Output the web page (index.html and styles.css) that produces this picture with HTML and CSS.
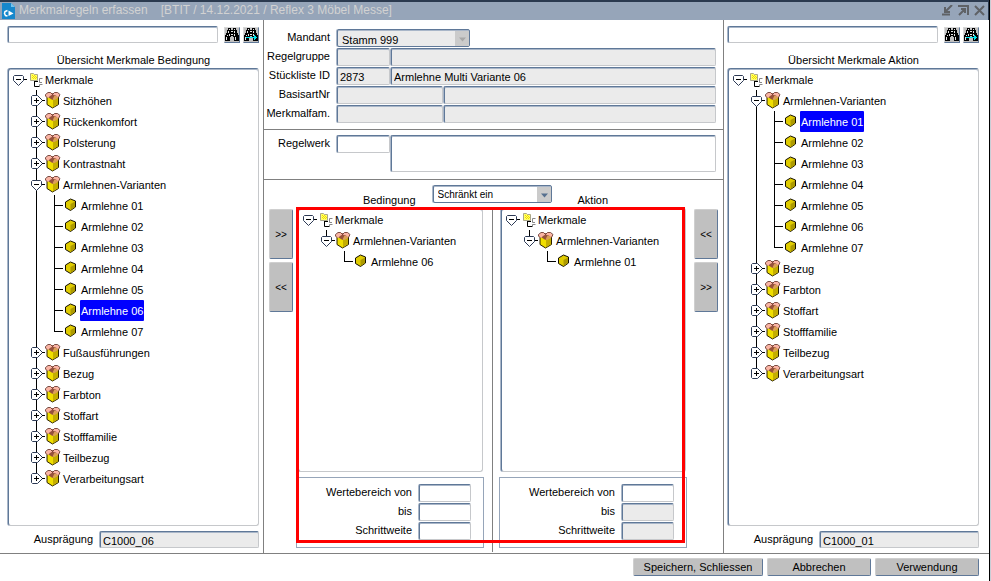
FILE: index.html
```html
<!DOCTYPE html>
<html lang="de">
<head>
<meta charset="utf-8">
<meta name="viewport" content="width=device-width, initial-scale=1">
<title>Merkmalregeln erfassen</title>
<link rel="stylesheet" href="styles.css">
</head>
<body>
<svg class="sprite" aria-hidden="true">
  <symbol id="open" viewBox="0 0 17 21">
    <path d="M4.5 6.5H12.5L13.5 7.5V11.5L8.5 16.5L3.5 11.5V7.5Z" fill="#fff" stroke="#2c3a55"/>
    <path d="M6 10.5H11M14 10.5H17" stroke="#000" fill="none"/>
  </symbol>
  <symbol id="closed" viewBox="0 0 17 21">
    <path d="M4.5 5.5H9.5L14.5 10.5L9.5 15.5H4.5L3.5 14.5V6.5Z" fill="#fff" stroke="#2c3a55"/>
    <path d="M6 10.5H11M8.5 8V13M14 10.5H17" stroke="#000" fill="none"/>
  </symbol>
  <symbol id="root" viewBox="0 0 16 21">
    <path d="M3.5 4.5H6.5L7.5 5.5H10.5V11.5H3.5Z" fill="#ffff66" stroke="#aaa68a"/>
    <path d="M5 6h1v1h-1zM7 6h1v1h-1zM6 7h1v1h-1zM8 7h1v1h-1zM5 8h1v1h-1zM7 8h1v1h-1zM9 8h1v1h-1zM6 9h1v1h-1zM8 9h1v1h-1z" fill="#f0dc00"/>
    <path d="M7.500 12V17.500H12M8 12.500H11" fill="none" stroke="#000"/>
    <path d="M15.500 9.500H12.500V13.500H15M15.500 15.500H12.500V18" fill="none" stroke="#888"/>
  </symbol>
  <symbol id="box" viewBox="0 0 16 21">
    <path d="M2 6V14.500L7.500 18L13.500 14.500V6Z" fill="#f0de00" stroke="#2a2000"/>
    <path d="M8 10L13 7V14L8 17.500Z" fill="#c4ae00"/>
    <path d="M2 6.500L7.500 3L13 6.500L7.500 10Z" fill="#96513c"/>
    <path d="M7.500 9.500L9.500 5.500L13 6.500V8L9.500 10Z" fill="#dca057"/>
    <path d="M.5 5L3 2.500H6L7.500 4.500L5 6L3 8L.5 6.500Z" fill="#fab4a4"/>
    <path d="M7.500 4.500L9.500 2.500H12.500L15 5L13.500 7.500L11 5.500Z" fill="#fab4a4"/>
    <path d="M2 7.500L.5 6V4.500L3 2.500H5.500L7.500 4.500L9.500 2.500H12.500L15 4.500L13.500 7.500" fill="none" stroke="#5a2a20" stroke-width=".8"/>
  </symbol>
  <symbol id="cube" viewBox="0 0 16 21">
    <path d="M2.500 7L7.500 4L12.500 6V12L7.500 15.500L2.500 12.500Z" fill="#e0cc00" stroke="#151000"/>
    <path d="M7.500 9L12 6.500V12L7.500 15Z" fill="#ad9a00"/>
  </symbol>
  <symbol id="binoculars" viewBox="0 0 14 14">
    <path d="M3 0h3v2h2V0h3v2h1v3h1v2h1v6H9V9H8V8H6v1H5v4H0V7h1V5h1V2h1z" fill="#000"/>
    <path d="M4 1h1v1H4zM9 1h1v1H9zM3 3h1v2H3zM6 3h2v1H6zM9 3h1v2H9zM2 7h1v1H2zM1 9h1v3H1zM4 6h1v2H4zM9 6h1v2H9zM10 9h1v3h-1zM6 6h2v1H6z" fill="#e4e4e4"/>
  </symbol>
  <symbol id="binoculars-next" viewBox="0 0 14 14">
    <use href="#binoculars" width="14" height="14"/>
    <path d="M2 9h8V7h1v1h1v1h1v1h-1v1h-1v1h-1v-2H2z" fill="#00e5ee"/>
  </symbol>
</svg>

<div class="window">
  <header class="titlebar">
    <svg class="logo" viewBox="0 0 14 16" aria-hidden="true">
      <path d="M0 0H9L13 4V16H0Z" fill="#1687cc"/>
      <path d="M9 0L13 4H9Z" fill="#74c4ee"/>
      <path d="M5.500 7.500L3 8.500L2.500 10.500L3.500 12.500L5.500 13" fill="none" stroke="#fff" stroke-width="1.500"/>
      <path d="M6.500 7.500L11.500 10.500L6.500 13Z" fill="#fff"/>
    </svg>
    <h1>Merkmalregeln erfassen</h1>
    <span class="context">[BTIT / 14.12.2021 / Reflex 3 Möbel Messe]</span>
    <div class="controls">
      <button type="button" aria-label="Minimieren"><svg viewBox="0 0 11 11"><path d="M10 0L4 6M3 2V7H8M0 9.500H8" /></svg></button>
      <button type="button" aria-label="Maximieren"><svg viewBox="0 0 11 11"><path d="M1 10L7 4M3 4H7V8M0 1H10V10" /></svg></button>
      <button type="button" aria-label="Schließen"><svg viewBox="0 0 11 11"><path d="M1 1L10 10M10 1L1 10" /></svg></button>
    </div>
  </header>

  <main class="panes">
    <section class="side side-left">
      <div class="search">
        <input class="field" type="text" aria-label="Suche Bedingung">
        <button type="button" aria-label="Suchen"><svg><use href="#binoculars"/></svg></button>
        <button type="button" aria-label="Weitersuchen"><svg><use href="#binoculars-next"/></svg></button>
      </div>
      <h2>Übersicht Merkmale Bedingung</h2>
      <div class="tree">
        <div class="row"><svg class="toggle"><use href="#open"/></svg><svg class="icon"><use href="#root"/></svg><span>Merkmale</span></div>
        <ul>
          <li><div class="row"><svg class="toggle"><use href="#closed"/></svg><svg class="icon"><use href="#box"/></svg><span>Sitzhöhen</span></div></li>
          <li><div class="row"><svg class="toggle"><use href="#closed"/></svg><svg class="icon"><use href="#box"/></svg><span>Rückenkomfort</span></div></li>
          <li><div class="row"><svg class="toggle"><use href="#closed"/></svg><svg class="icon"><use href="#box"/></svg><span>Polsterung</span></div></li>
          <li><div class="row"><svg class="toggle"><use href="#closed"/></svg><svg class="icon"><use href="#box"/></svg><span>Kontrastnaht</span></div></li>
          <li><div class="row"><svg class="toggle"><use href="#open"/></svg><svg class="icon"><use href="#box"/></svg><span>Armlehnen-Varianten</span></div>
            <ul>
              <li class="leaf"><div class="row"><svg class="icon"><use href="#cube"/></svg><span>Armlehne 01</span></div></li>
              <li class="leaf"><div class="row"><svg class="icon"><use href="#cube"/></svg><span>Armlehne 02</span></div></li>
              <li class="leaf"><div class="row"><svg class="icon"><use href="#cube"/></svg><span>Armlehne 03</span></div></li>
              <li class="leaf"><div class="row"><svg class="icon"><use href="#cube"/></svg><span>Armlehne 04</span></div></li>
              <li class="leaf"><div class="row"><svg class="icon"><use href="#cube"/></svg><span>Armlehne 05</span></div></li>
              <li class="leaf"><div class="row"><svg class="icon"><use href="#cube"/></svg><span class="selected">Armlehne 06</span></div></li>
              <li class="leaf"><div class="row"><svg class="icon"><use href="#cube"/></svg><span>Armlehne 07</span></div></li>
            </ul>
          </li>
          <li><div class="row"><svg class="toggle"><use href="#closed"/></svg><svg class="icon"><use href="#box"/></svg><span>Fußausführungen</span></div></li>
          <li><div class="row"><svg class="toggle"><use href="#closed"/></svg><svg class="icon"><use href="#box"/></svg><span>Bezug</span></div></li>
          <li><div class="row"><svg class="toggle"><use href="#closed"/></svg><svg class="icon"><use href="#box"/></svg><span>Farbton</span></div></li>
          <li><div class="row"><svg class="toggle"><use href="#closed"/></svg><svg class="icon"><use href="#box"/></svg><span>Stoffart</span></div></li>
          <li><div class="row"><svg class="toggle"><use href="#closed"/></svg><svg class="icon"><use href="#box"/></svg><span>Stofffamilie</span></div></li>
          <li><div class="row"><svg class="toggle"><use href="#closed"/></svg><svg class="icon"><use href="#box"/></svg><span>Teilbezug</span></div></li>
          <li><div class="row"><svg class="toggle"><use href="#closed"/></svg><svg class="icon"><use href="#box"/></svg><span>Verarbeitungsart</span></div></li>
        </ul>
      </div>
      <div class="value">
        <label for="val-left">Ausprägung</label>
        <input class="field" id="val-left" type="text" value="C1000_06" readonly>
      </div>
    </section>

    <section class="center">
      <div class="form">
        <div class="line"><label for="mandant">Mandant</label>
          <div class="select select-off"><select class="field" id="mandant" disabled><option>Stamm 999</option></select><svg viewBox="0 0 14 14" aria-hidden="true"><path d="M4 6H11L7.500 10Z"/></svg></div></div>
        <div class="line"><label for="gruppe">Regelgruppe</label><input class="field code" id="gruppe" readonly><input class="field" aria-label="Regelgruppe Bezeichnung" readonly></div>
        <div class="line"><label for="stueck">Stückliste ID</label><input class="field code" id="stueck" value="2873" readonly><input class="field" aria-label="Stückliste Bezeichnung" value="Armlehne Multi Variante 06" readonly></div>
        <div class="line"><label for="basis">BasisartNr</label><input class="field number" id="basis" readonly><input class="field" aria-label="Basisart Bezeichnung" readonly></div>
        <div class="line"><label for="fam">Merkmalfam.</label><input class="field number" id="fam" readonly><input class="field" aria-label="Merkmalfamilie Bezeichnung" readonly></div>
      </div>
      <div class="form rule">
        <div class="line"><label for="regel">Regelwerk</label><input class="field code" id="regel"><textarea class="field" aria-label="Regelwerk Text"></textarea></div>
      </div>
      <div class="mode">
        <h2 class="from">Bedingung</h2>
        <div class="select"><select class="field" aria-label="Art der Regel"><option>Schränkt ein</option></select><svg viewBox="0 0 14 14" aria-hidden="true"><path d="M4 6H11L7.500 10Z"/></svg></div>
        <h2 class="to">Aktion</h2>
      </div>
      <div class="work">
        <div class="movers">
          <button type="button">&gt;&gt;</button>
          <button type="button">&lt;&lt;</button>
        </div>
        <div class="pair">
          <div class="half">
            <div class="tree">
              <div class="row"><svg class="toggle"><use href="#open"/></svg><svg class="icon"><use href="#root"/></svg><span>Merkmale</span></div>
              <ul><li><div class="row"><svg class="toggle"><use href="#open"/></svg><svg class="icon"><use href="#box"/></svg><span>Armlehnen-Varianten</span></div>
                <ul><li class="leaf"><div class="row"><svg class="icon"><use href="#cube"/></svg><span>Armlehne 06</span></div></li></ul></li></ul>
            </div>
            <div class="range">
              <div><label for="a-von">Wertebereich von</label><input class="field" id="a-von"></div>
              <div><label for="a-bis">bis</label><input class="field" id="a-bis"></div>
              <div><label for="a-step">Schrittweite</label><input class="field" id="a-step"></div>
            </div>
          </div>
          <div class="divider"></div>
          <div class="half">
            <div class="tree">
              <div class="row"><svg class="toggle"><use href="#open"/></svg><svg class="icon"><use href="#root"/></svg><span>Merkmale</span></div>
              <ul><li><div class="row"><svg class="toggle"><use href="#open"/></svg><svg class="icon"><use href="#box"/></svg><span>Armlehnen-Varianten</span></div>
                <ul><li class="leaf"><div class="row"><svg class="icon"><use href="#cube"/></svg><span>Armlehne 01</span></div></li></ul></li></ul>
            </div>
            <div class="range">
              <div><label for="b-von">Wertebereich von</label><input class="field" id="b-von"></div>
              <div><label for="b-bis">bis</label><input class="field" id="b-bis" readonly></div>
              <div><label for="b-step">Schrittweite</label><input class="field" id="b-step" readonly></div>
            </div>
          </div>
          <div class="highlight"></div>
        </div>
        <div class="movers">
          <button type="button">&lt;&lt;</button>
          <button type="button">&gt;&gt;</button>
        </div>
      </div>
    </section>

    <section class="side side-right">
      <div class="search">
        <input class="field" type="text" aria-label="Suche Aktion">
        <button type="button" aria-label="Suchen"><svg><use href="#binoculars"/></svg></button>
        <button type="button" aria-label="Weitersuchen"><svg><use href="#binoculars-next"/></svg></button>
      </div>
      <h2>Übersicht Merkmale Aktion</h2>
      <div class="tree">
        <div class="row"><svg class="toggle"><use href="#open"/></svg><svg class="icon"><use href="#root"/></svg><span>Merkmale</span></div>
        <ul>
          <li><div class="row"><svg class="toggle"><use href="#open"/></svg><svg class="icon"><use href="#box"/></svg><span>Armlehnen-Varianten</span></div>
            <ul>
              <li class="leaf"><div class="row"><svg class="icon"><use href="#cube"/></svg><span class="selected">Armlehne 01</span></div></li>
              <li class="leaf"><div class="row"><svg class="icon"><use href="#cube"/></svg><span>Armlehne 02</span></div></li>
              <li class="leaf"><div class="row"><svg class="icon"><use href="#cube"/></svg><span>Armlehne 03</span></div></li>
              <li class="leaf"><div class="row"><svg class="icon"><use href="#cube"/></svg><span>Armlehne 04</span></div></li>
              <li class="leaf"><div class="row"><svg class="icon"><use href="#cube"/></svg><span>Armlehne 05</span></div></li>
              <li class="leaf"><div class="row"><svg class="icon"><use href="#cube"/></svg><span>Armlehne 06</span></div></li>
              <li class="leaf"><div class="row"><svg class="icon"><use href="#cube"/></svg><span>Armlehne 07</span></div></li>
            </ul>
          </li>
          <li><div class="row"><svg class="toggle"><use href="#closed"/></svg><svg class="icon"><use href="#box"/></svg><span>Bezug</span></div></li>
          <li><div class="row"><svg class="toggle"><use href="#closed"/></svg><svg class="icon"><use href="#box"/></svg><span>Farbton</span></div></li>
          <li><div class="row"><svg class="toggle"><use href="#closed"/></svg><svg class="icon"><use href="#box"/></svg><span>Stoffart</span></div></li>
          <li><div class="row"><svg class="toggle"><use href="#closed"/></svg><svg class="icon"><use href="#box"/></svg><span>Stofffamilie</span></div></li>
          <li><div class="row"><svg class="toggle"><use href="#closed"/></svg><svg class="icon"><use href="#box"/></svg><span>Teilbezug</span></div></li>
          <li><div class="row"><svg class="toggle"><use href="#closed"/></svg><svg class="icon"><use href="#box"/></svg><span>Verarbeitungsart</span></div></li>
        </ul>
      </div>
      <div class="value">
        <label for="val-right">Ausprägung</label>
        <input class="field" id="val-right" type="text" value="C1000_01" readonly>
      </div>
    </section>
  </main>

  <footer class="actions">
    <button type="button" class="wide">Speichern, Schliessen</button>
    <button type="button">Abbrechen</button>
    <button type="button">Verwendung</button>
  </footer>
</div>
</body>
</html>
```
FILE: styles.css
```css
:root {
  --edge: #5f7898;
  --edge-soft: #a9b6c8;
  --light: #c6c8cb;
  --line: #808080;
  --off: #ebebeb;
  --button: #c0c0c0;
}

* {
  box-sizing: border-box;
}

body {
  margin: 0;
  padding-right: 1px;
  background: #c9ced6;
  color: #000;
  font: 11px/15px "Liberation Sans", Arial, sans-serif;
}

h1,
h2,
ul {
  margin: 0;
  padding: 0;
  font-size: inherit;
  font-weight: normal;
  list-style: none;
}

button,
input,
select,
textarea {
  margin: 0;
  padding: 0;
  border-radius: 0;
  color: #000;
  font: inherit;
}

.sprite {
  position: absolute;
  width: 0;
  height: 0;
}

.window {
  display: flex;
  flex-direction: column;
  min-height: 100vh;
  border-right: 1px solid #000;
  background: #fff;
}

/* Title bar */
.titlebar {
  display: flex;
  align-items: center;
  height: 20px;
  padding: 0 3px 1px 2px;
  border-top: 2px solid #2b3a4f;
  border-right: 1px solid #2b3a4f;
  background: #96a5b9;
  color: #d2d2d2;
  font-size: 12px;
}

.logo {
  width: 14px;
  height: 16px;
  margin-right: 3px;
}

.context {
  margin-left: 13px;
}

.controls {
  display: flex;
  gap: 5px;
  margin-left: auto;
}

.controls button {
  width: 11px;
  height: 11px;
  border: 0;
  background: none;
}

.controls svg {
  display: block;
  width: 11px;
  height: 11px;
  fill: none;
  stroke: #5f6266;
  stroke-width: 2;
}

/* Panes */
.panes {
  display: grid;
  flex: 1;
  grid-template-columns: 264px 1fr 266px;
  border-bottom: 1px solid var(--line);
}

.side {
  display: flex;
  flex-direction: column;
  padding: 6px 4px 5px 8px;
  border-right: 1px solid var(--line);
}

.side-right {
  padding: 6px 10px 5px 4px;
  border-right: 0;
  border-left: 1px solid var(--line);
}

.side h2 {
  margin-top: 10px;
  text-align: center;
}

.field {
  min-width: 0;
  height: 18px;
  padding: 2px 0 0 2px;
  border: 1px solid var(--edge);
  border-right-color: var(--light);
  border-bottom-color: var(--light);
  border-radius: 2px;
  outline: 0;
  background: #fff;
  box-shadow: -1px 0 0 var(--edge-soft), inset 0 1px 0 var(--edge-soft);
}

.field:read-only:not(select) {
  background: var(--off);
}

.search {
  display: flex;
  align-items: center;
  gap: 3px;
}

.search .field {
  flex: 1;
  height: 17px;
  margin-right: 3px;
}

.search button {
  width: 16px;
  height: 16px;
  border: 1px solid #d8d8d8;
  border-right-color: var(--edge);
  border-bottom-color: var(--edge);
  background: var(--button);
}

.search svg {
  display: block;
  width: 14px;
  height: 14px;
  shape-rendering: crispEdges;
}

.value {
  display: flex;
  gap: 7px;
  margin-top: 5px;
}

.value label {
  width: 85px;
  line-height: 17px;
  text-align: right;
}

.value .field {
  flex: 1;
  height: 17px;
}

/* Trees */
.tree {
  flex: 1;
  padding-left: 1px;
  border: 1px solid var(--edge);
  border-right-color: var(--light);
  border-bottom-color: var(--light);
  border-radius: 3px;
  background: #fff;
  box-shadow: -1px 0 0 var(--edge-soft), inset 0 1px 0 var(--edge-soft);
}

.row {
  display: flex;
  height: 21px;
}

.row span {
  padding: 0 1px;
  border-radius: 1px;
  line-height: 22px;
  white-space: nowrap;
}

.row .selected {
  background: #0000ff;
  color: #fff;
}

.toggle {
  width: 17px;
  height: 21px;
}

.icon {
  width: 16px;
  height: 21px;
  margin-right: 1px;
}

.tree ul {
  margin-left: 18px;
}

.tree li {
  background: linear-gradient(#000, #000) 8px 0 / 1px 100% no-repeat;
}

.tree li:last-child {
  background-size: 1px 11px;
}

.tree .leaf {
  padding-left: 17px;
  background:
    linear-gradient(#000, #000) 8px 0 / 1px 100% no-repeat,
    linear-gradient(#000, #000) 8px 10px / 9px 1px no-repeat;
}

.tree .leaf:last-child {
  background-size: 1px 11px, 9px 1px;
}

/* Center */
.center {
  display: flex;
  flex-direction: column;
}

.form {
  display: flex;
  flex-direction: column;
  gap: 1px;
  padding: 9px 7px 6px 0;
  border-bottom: 1px solid var(--line);
}

.rule {
  padding: 5px 7px 7px 0;
}

.line {
  display: flex;
  gap: 1px;
}

.line label {
  width: 66px;
  margin-right: 6px;
  line-height: 17px;
  text-align: right;
}

.line .field {
  flex: 1;
}

.line .code {
  flex: 0 0 53px;
}

.line .number {
  flex: 0 0 106px;
}

.line textarea {
  height: 37px;
  resize: none;
}

.select {
  position: relative;
  width: 119px;
  height: 18px;
}

.line .select {
  width: 133px;
}

.select select {
  width: 100%;
  padding: 0 16px 0 4px;
  border-color: var(--edge);
  appearance: none;
  opacity: 1;
}

.select svg {
  position: absolute;
  top: 2px;
  right: 1px;
  width: 14px;
  height: 15px;
  background: #cbcbcb;
  fill: #56708f;
  pointer-events: none;
}

.select-off select {
  padding-top: 3px;
  background: var(--off);
}

.select-off svg {
  fill: #a8a8a8;
}

.mode {
  display: flex;
  padding: 5px 0 0 6px;
}

.mode select {
  font-size: 10px;
}

.mode h2 {
  flex: 1;
  padding-top: 8px;
}

.from {
  padding-right: 17px;
  text-align: right;
}

.to {
  padding-left: 26px;
}

.work {
  display: flex;
  flex: 1;
}

.movers {
  display: flex;
  flex: 0 0 29px;
  flex-direction: column;
  gap: 3px;
  padding: 1px 0 0 5px;
}

.pair + .movers {
  padding: 1px 5px 0 0;
}

.movers button {
  height: 50px;
  font-size: 10px;
}

.movers button,
.actions button {
  border: 1px solid #cfcfcf;
  border-right-color: var(--edge);
  border-bottom-color: var(--edge);
  border-radius: 2px;
  background: var(--button);
}

.pair {
  position: relative;
  display: flex;
  flex: 1;
  margin: 0 7px 0 3px;
}

.half {
  display: flex;
  flex: 1;
  flex-direction: column;
  padding-bottom: 5px;
}

.half .tree {
  margin: 0 1px 0 2px;
}

.divider {
  width: 1px;
  margin: 0 6px 1px 8px;
  background: var(--line);
}

.range {
  display: flex;
  flex-direction: column;
  gap: 1px;
  margin-top: 5px;
  padding: 6px 12px 7px 0;
  border: 1px solid #96a5b9;
}

.range div {
  display: flex;
  justify-content: flex-end;
  gap: 7px;
}

.range label {
  line-height: 17px;
}

.range .field {
  width: 52px;
}

/* Marks the area that holds the resulting rule */
.highlight {
  position: absolute;
  inset: -1px 2px 10px 0;
  border: 3px solid #ff0000;
  pointer-events: none;
}

/* Footer */
.actions {
  display: flex;
  justify-content: flex-end;
  gap: 4px;
  padding: 4px 10px 5px 0;
}

.actions button {
  width: 104px;
  height: 18px;
}

.actions .wide {
  width: 130px;
}
```
